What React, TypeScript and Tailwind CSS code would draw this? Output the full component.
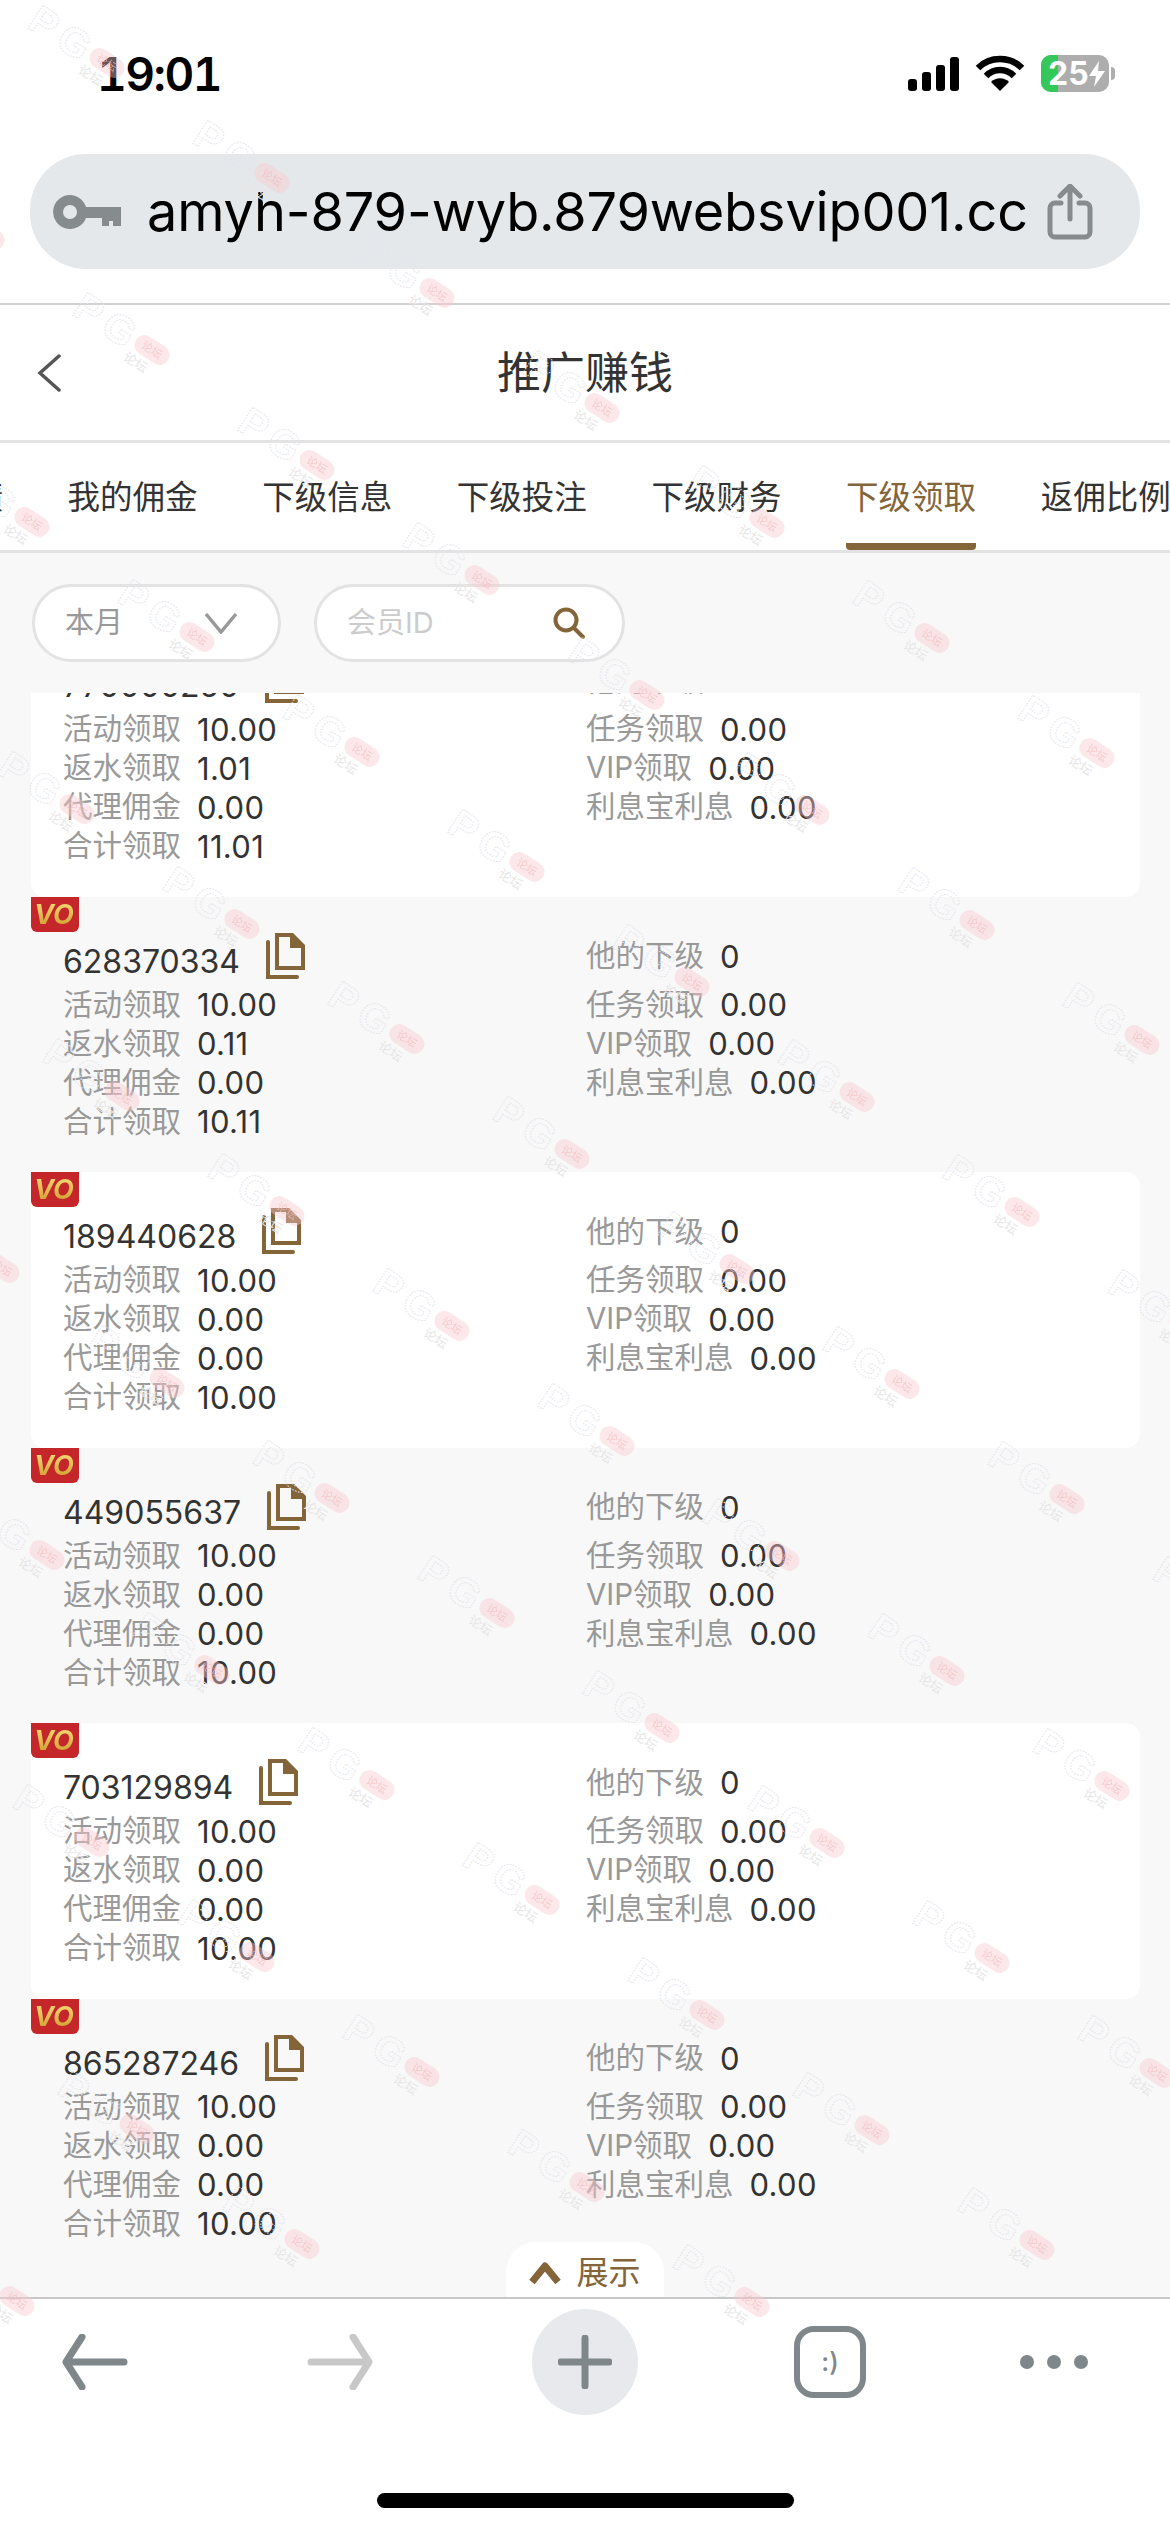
import React from 'react';

const BRAND = '#84653a';

type Member = {
  id: string;
  activity: string;
  rebate: string;
  commission: string;
  total: string;
};

const members: Member[] = [
  { id: '770000250', activity: '10.00', rebate: '1.01', commission: '0.00', total: '11.01' },
  { id: '628370334', activity: '10.00', rebate: '0.11', commission: '0.00', total: '10.11' },
  { id: '189440628', activity: '10.00', rebate: '0.00', commission: '0.00', total: '10.00' },
  { id: '449055637', activity: '10.00', rebate: '0.00', commission: '0.00', total: '10.00' },
  { id: '703129894', activity: '10.00', rebate: '0.00', commission: '0.00', total: '10.00' },
  { id: '865287246', activity: '10.00', rebate: '0.00', commission: '0.00', total: '10.00' },
];

const tabs = ['我的业绩', '我的佣金', '下级信息', '下级投注', '下级财务', '下级领取', '返佣比例'];

// forum stamp repeated across the whole page
const Stamp = ({ x, y }: { x: number; y: number }) => (
  <svg
    width="200"
    height="160"
    viewBox="-130 -80 200 160"
    className="absolute"
    style={{ left: x - 130, top: y - 80 }}
  >
    <g transform="rotate(33)" fontFamily="Liberation Sans, sans-serif" fontWeight="700">
      <text x="-88" y="14" fontSize="40" fill="none" stroke="#e4e4ec" strokeWidth="1" strokeDasharray="1.5 1.5">P</text>
      <text x="-54" y="14" fontSize="40" fill="none" stroke="#e4e4ec" strokeWidth="1" strokeDasharray="1.5 1.5">G</text>
      <rect x="-19" y="-10" width="38" height="20" rx="10" fill="#f9c9cc" opacity="0.42" />
      <text x="-11" y="4" fontSize="11" fill="#f3bcc0" opacity="0.7" fontFamily="Noto Sans CJK SC, sans-serif" fontWeight="400">论坛</text>
      <text x="-20" y="24" fontSize="13" fill="#e6e6e6" fontFamily="Noto Sans CJK SC, sans-serif" fontWeight="400">论坛</text>
    </g>
  </svg>
);

const stamps = () => {
  const out: { x: number; y: number }[] = [];
  for (let i = -6; i < 22; i++) {
    for (let j = 0; j < 16; j++) {
      const x = 107 + 165 * i - 120 * j;
      const y = 63 + 115 * i + 172 * j;
      if (x > -40 && x < 1240 && y > -30 && y < 2320) out.push({ x, y });
    }
  }
  return out;
};

const StatusBar = () => (
  <div className="flex h-[154px] shrink-0 items-start pt-[48px]">
    <span className="ml-[97px] font-['Inter',sans-serif] text-[46px] leading-[52px] font-semibold tabular-nums tracking-[-1.5px] text-black">19:01</span>
    <div className="ml-auto mr-[55px] mt-[7px] flex items-start">
      <svg width="51" height="34" viewBox="0 0 51 34" className="mt-[2px]" fill="#000">
        <rect x="0" y="22" width="9" height="12" rx="3" />
        <rect x="14" y="15" width="9" height="19" rx="3" />
        <rect x="28" y="8" width="9" height="26" rx="3" />
        <rect x="42" y="0" width="9" height="34" rx="3" />
      </svg>
      <svg width="50" height="36" viewBox="0 0 50 36" className="ml-[16px]" fill="none" stroke="#000" strokeWidth="6.5">
        <path d="M3 13 C15 1 35 1 47 13" />
        <path d="M11 21 C19 13 31 13 39 21" />
        <path d="M25 36 L16 27 C21 22 29 22 34 27 Z" fill="#000" stroke="none" />
      </svg>
      <div className="relative ml-[16px] flex h-[37px] w-[68px] items-center overflow-hidden rounded-[10px] bg-[#adadad]">
        <div className="absolute inset-y-0 left-0 w-[17px] bg-[#34c759]" />
        <span className="relative ml-[7px] font-['Inter',sans-serif] text-[32px] leading-none font-bold text-white">25</span>
        <svg width="16" height="26" viewBox="0 0 16 26" className="relative" fill="#fff">
          <path d="M10 0 L0 15 H7 L5 26 L16 10 H9 Z" />
        </svg>
      </div>
      <div className="ml-[2px] mt-[12px] h-[13px] w-[4px] rounded-r-full bg-[#adadad]" />
    </div>
  </div>
);

const UrlBar = () => (
  <div className="shrink-0 px-[30px] pb-[34px]">
    <div className="flex h-[115px] items-center rounded-[56px] bg-[#e5e8eb] pl-[23px] pr-[47px]">
      <svg width="68" height="34" viewBox="0 0 68 34" fill="#868b8e">
        <path fillRule="evenodd" d="M17 0 a17 17 0 0 1 16 12 H68 V31 H60 V26 H56 V31 H49 V23 H33 A17 17 0 1 1 17 0 Z M17 10 a7 7 0 1 0 0 14 a7 7 0 0 0 0 -14 Z" />
      </svg>
      <span className="ml-[26px] font-['Inter',sans-serif] text-[54px] leading-none tracking-[-0.15px] text-black">amyh-879-wyb.879websvip001.cc</span>
      <svg width="46" height="56" viewBox="0 0 46 56" className="ml-auto" fill="none" stroke="#868b8e" strokeWidth="5" strokeLinecap="round" strokeLinejoin="round">
        <path d="M14 19 H8 a5 5 0 0 0 -5 5 V48 a5 5 0 0 0 5 5 H38 a5 5 0 0 0 5 -5 V24 a5 5 0 0 0 -5 -5 H32" />
        <path d="M23 35 V3 M13 12 L23 2 L33 12" />
      </svg>
    </div>
  </div>
);

const PageHeader = () => (
  <div className="grid h-[140px] shrink-0 grid-cols-3 items-center border-y-[2px] border-b-[3px] border-t-[#d2d2d2] border-b-[#e3e3e3] bg-white">
    <svg width="24" height="38" viewBox="0 0 24 38" className="ml-[37px]" fill="none" stroke="#555" strokeWidth="3.5" strokeLinecap="round">
      <path d="M22 2 L3 19 L22 36" />
    </svg>
    <h1 className="text-center text-[44px] leading-none font-normal text-[#333]">推广赚钱</h1>
  </div>
);

const TabBar = () => (
  <div className="flex h-[110px] shrink-0 gap-[64.6px] overflow-hidden border-b-[3px] border-[#e3e3e3] bg-white pl-[3px]">
    {tabs.map((tab, i) => {
      const active = tab === '下级领取';
      return (
        <div
          key={tab}
          className={`flex h-[107px] shrink-0 items-center border-b-[7px] pt-[11px] text-[32.5px] leading-none ${i === 0 ? '-ml-[130px]' : ''} ${
            active ? 'rounded-b-[4px] border-[#84653a] text-[#84653a]' : 'border-transparent text-[#333]'
          }`}
        >
          {tab}
        </div>
      );
    })}
  </div>
);

const Filters = () => (
  <div className="flex h-[140px] shrink-0 gap-[33px] bg-[#f8f8f8] pl-[32px] pt-[31px]">
    <div className="flex h-[78px] w-[249px] items-center rounded-[39px] border-[3px] border-[#e3e3e3] bg-white pl-[30px] text-[29px] text-[#999]">
      本月
      <svg width="34" height="22" viewBox="0 0 34 22" className="ml-[81px]" fill="none" stroke="#999" strokeWidth="3.5">
        <path d="M2 2 L17 20 L32 2" />
      </svg>
    </div>
    <div className="flex h-[78px] w-[311px] items-center rounded-[39px] border-[3px] border-[#e3e3e3] bg-white pl-[30px] text-[29px] text-[#ccc]">
      会员ID
      <svg width="32" height="32" viewBox="0 0 32 32" className="ml-auto mr-[37px]" fill="none" stroke={BRAND} strokeWidth="4" strokeLinecap="round">
        <circle cx="13" cy="13" r="10.5" />
        <path d="M21 21 L30 30" />
      </svg>
    </div>
  </div>
);

const CopyIcon = () => (
  <svg width="39" height="46" viewBox="0 0 39 46" className="ml-[26px] shrink-0" fill="none" stroke={BRAND} strokeWidth="4">
    <path d="M11 2 H26 L37 13 V35 H11 Z" />
    <path d="M26 2 V13 H37 Z" fill={BRAND} />
    <path d="M2 9 V44 H31" strokeLinecap="round" />
  </svg>
);

const Stat = ({ label, value }: { label: string; value: string }) => (
  <div className="flex h-[39px] items-center">
    <span className="text-[29.5px] leading-none text-[#999]">{label}</span>
    <span className="ml-[16px] text-[31px] leading-none tracking-[0.3px] text-[#333]">{value}</span>
  </div>
);

const MemberRow = ({ member, white }: { member: Member; white: boolean }) => (
  <div className={`relative grid h-[275.5px] grid-cols-[523px_1fr] pl-[32px] ${white ? 'rounded-[14px] bg-white' : ''}`}>
    <div className="absolute left-0 top-0 flex h-[35px] w-[48px] items-center justify-center rounded-b-[6px] bg-[#c4262a]">
      <span className="bg-gradient-to-b from-[#f6dc78] to-[#cf9d28] bg-clip-text pr-[2px] text-[27px] leading-none font-bold italic text-transparent">VO</span>
    </div>
    <div>
      <div className="flex h-[88.5px] items-start pt-[36px]">
        <span className="mt-[9px] text-[32px] leading-[40px] text-[#333]">{member.id}</span>
        <CopyIcon />
      </div>
      <Stat label="活动领取" value={member.activity} />
      <Stat label="返水领取" value={member.rebate} />
      <Stat label="代理佣金" value={member.commission} />
      <Stat label="合计领取" value={member.total} />
    </div>
    <div>
      <div className="h-[88.5px] pt-[40px]">
        <Stat label="他的下级" value="0" />
      </div>
      <Stat label="任务领取" value="0.00" />
      <Stat label="VIP领取" value="0.00" />
      <Stat label="利息宝利息" value="0.00" />
    </div>
  </div>
);

const BottomBar = () => (
  <div className="flex h-[235px] shrink-0 flex-col border-t-[2px] border-[#c8c8c8] bg-white">
    <div className="mt-[10px] flex h-[106px] items-center">
      <svg width="66" height="56" viewBox="0 0 66 56" className="ml-[62px]" fill="none" stroke="#7f878b" strokeWidth="7" strokeLinecap="round" strokeLinejoin="round">
        <path d="M62 28 H5 M20 3 L4 28 L20 53" />
      </svg>
      <svg width="66" height="56" viewBox="0 0 66 56" className="ml-[179px]" fill="none" stroke="#c8c8c8" strokeWidth="7" strokeLinecap="round" strokeLinejoin="round">
        <path d="M4 28 H61 M46 3 L62 28 L46 53" />
      </svg>
      <div className="ml-[159px] flex size-[106px] items-center justify-center rounded-full bg-[#e8e9ed]">
        <svg width="54" height="54" viewBox="0 0 54 54" fill="none" stroke="#7f878b" strokeWidth="7" strokeLinecap="round">
          <path d="M27 3 V51 M3 27 H51" />
        </svg>
      </div>
      <div className="ml-[156px] flex size-[72px] items-center justify-center rounded-[20px] border-[6px] border-[#7f878b] font-['Inter',sans-serif] text-[26px] leading-none font-medium text-[#7f878b]">
        :)
      </div>
      <div className="ml-[154px] flex gap-[13px]">
        <div className="size-[14px] rounded-full bg-[#7f878b]" />
        <div className="size-[14px] rounded-full bg-[#7f878b]" />
        <div className="size-[14px] rounded-full bg-[#7f878b]" />
      </div>
    </div>
    <div className="mx-auto mt-[78px] h-[15px] w-[417px] rounded-full bg-black" />
  </div>
);

export default function App() {
  return (
    <div className="relative flex h-[2532px] w-[1170px] flex-col overflow-hidden bg-white font-['Inter','Noto_Sans_CJK_SC',sans-serif]">
      <StatusBar />
      <UrlBar />
      <PageHeader />
      <TabBar />
      <Filters />
      <div className="relative min-h-0 flex-1 bg-[#f8f8f8]">
        <div className="h-full overflow-hidden px-[31px]">
          {/* list is scrolled a little past its first row */}
          <div className="-mt-[72px] w-[1109px]">
            {members.map((m, i) => (
              <MemberRow key={m.id} member={m} white={i % 2 === 0} />
            ))}
          </div>
        </div>
        <div className="absolute bottom-0 left-[506px] flex h-[55px] w-[158px] items-center justify-center rounded-t-[30px] bg-white pt-[6px] text-[32px] leading-none text-[#84653a]">
          <svg width="32" height="24" viewBox="0 0 32 24" className="mr-[15px]" fill="none" stroke={BRAND} strokeWidth="7" strokeLinejoin="round">
            <path d="M3 21 L16 5 L29 21" />
          </svg>
          展示
        </div>
      </div>
      <BottomBar />
      <div className="pointer-events-none absolute inset-0 overflow-hidden">
        {stamps().map((s) => (
          <Stamp key={`${s.x}-${s.y}`} x={s.x} y={s.y} />
        ))}
      </div>
    </div>
  );
}
